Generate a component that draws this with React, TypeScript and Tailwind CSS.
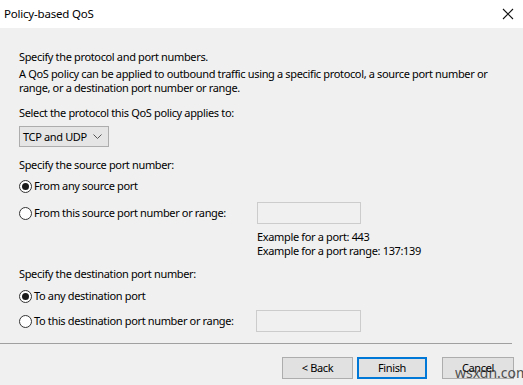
import React from "react";

const font = { fontFamily: '"Noto Sans", "Open Sans", sans-serif' };

function Radio({ checked }: { checked?: boolean }) {
  return (
    <span className="w-[13px] h-[13px] rounded-full border border-[#333333] bg-white flex items-center justify-center shrink-0">
      {checked && <span className="w-[7px] h-[7px] rounded-full bg-[#1a1a1a]" />}
    </span>
  );
}

function RadioRow({ label, checked }: { label: string; checked?: boolean }) {
  return (
    <div className="flex items-center gap-[2px] h-[14px]">
      <Radio checked={checked} />
      <span className="leading-[14px]">{label}</span>
    </div>
  );
}

function Btn({ label, primary }: { label: string; primary?: boolean }) {
  return (
    <div
      className={
        "h-[22px] flex items-center justify-center bg-[#e1e1e1] " +
        (primary ? "border-2 border-[#0078d7]" : "border border-[#adadad]")
      }
    >
      {label}
    </div>
  );
}

export default function App() {
  return (
    <div
      className="w-[523px] h-[385px] bg-[#f0f0f0] text-[11px] tracking-[-0.35px] text-black overflow-hidden relative whitespace-nowrap"
      style={font}
    >
      <div className="h-[28px] bg-white flex items-center justify-between pl-[4px] pr-[9px]">
        <span className="text-[11.5px] leading-[14px] tracking-[-0.2px]">Policy-based QoS</span>
        <svg width="12" height="12" viewBox="0 0 12 12" className="mt-[-1px]">
          <path d="M1 1 L11 11 M11 1 L1 11" stroke="#111" strokeWidth="1.1" />
        </svg>
      </div>
      <div className="pl-[19px] pt-[22px] leading-[14px]">
        <div>Specify the protocol and port numbers.</div>
        <div className="mt-[3px]">
          A QoS policy can be applied to outbound traffic using a specific protocol, a source port number or
          <br />
          range, or a destination port number or range.
        </div>
        <div className="mt-[11px]">Select the protocol this QoS policy applies to:</div>
        <div className="mt-[6px] w-[90px] h-[21px] bg-[#e5e5e5] border border-[#adadad] flex items-center justify-between pl-[3px] pr-[6px]">
          <span>TCP and UDP</span>
          <svg width="9" height="6" viewBox="0 0 9 6">
            <path d="M0.5 0.5 L4.5 4.5 L8.5 0.5" stroke="#555" strokeWidth="1" fill="none" />
          </svg>
        </div>
        <div className="mt-[11px]">Specify the source port number:</div>
        <div className="mt-[7px]">
          <RadioRow label="From any source port" checked />
        </div>
        <div className="mt-[9px] flex items-center h-[22px]">
          <div className="w-[238px]">
            <RadioRow label="From this source port number or range:" />
          </div>
          <div className="w-[104px] h-[22px] bg-[#f0f0f0] border border-[#cccccc]" />
        </div>
        <div className="mt-[6px] ml-[238px]">
          <div>Example for a port: 443</div>
          <div>Example for a port range: 137:139</div>
        </div>
        <div className="mt-[9px]">Specify the destination port number:</div>
        <div className="mt-[8px]">
          <RadioRow label="To any destination port" checked />
        </div>
        <div className="mt-[7px] flex items-center h-[22px]">
          <div className="w-[237px]">
            <RadioRow label="To this destination port number or range:" />
          </div>
          <div className="w-[105px] h-[22px] bg-[#f0f0f0] border border-[#cccccc]" />
        </div>
      </div>
      <div className="mt-[11px] w-[512px] h-px bg-[#a0a0a0]" />
      <div className="mt-[13px] flex justify-end pr-[9px]">
        <div className="w-[71px]">
          <Btn label="< Back" />
        </div>
        <div className="w-[70px] ml-[4px]">
          <Btn label="Finish" primary />
        </div>
        <div className="w-[72px] ml-[15px]">
          <Btn label="Cancel" />
        </div>
      </div>
      <div className="absolute left-[455px] top-[365px] text-[14px] leading-[16px] tracking-normal text-[#2a2a2a] opacity-80">
        wsxdn.com
      </div>
    </div>
  );
}
